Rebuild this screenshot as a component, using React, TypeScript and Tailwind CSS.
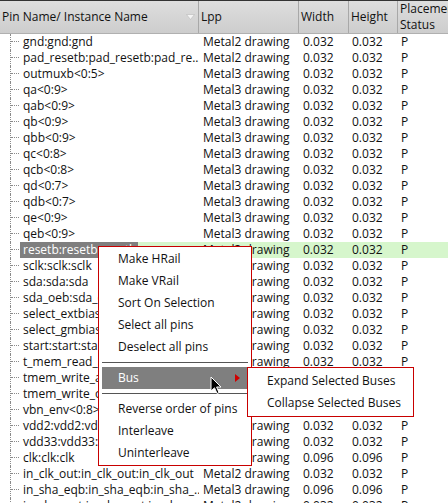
const rows: [string, string, string, string, string][] = [
  ["gnd:gnd:gnd", "Metal2 drawing", "0.032", "0.032", "P"],
  ["pad_resetb:pad_resetb:pad_re...", "Metal2 drawing", "0.032", "0.032", "P"],
  ["outmuxb<0:5>", "Metal3 drawing", "0.032", "0.032", "P"],
  ["qa<0:9>", "Metal3 drawing", "0.032", "0.032", "P"],
  ["qab<0:9>", "Metal3 drawing", "0.032", "0.032", "P"],
  ["qb<0:9>", "Metal3 drawing", "0.032", "0.032", "P"],
  ["qbb<0:9>", "Metal3 drawing", "0.032", "0.032", "P"],
  ["qc<0:8>", "Metal3 drawing", "0.032", "0.032", "P"],
  ["qcb<0:8>", "Metal3 drawing", "0.032", "0.032", "P"],
  ["qd<0:7>", "Metal3 drawing", "0.032", "0.032", "P"],
  ["qdb<0:7>", "Metal3 drawing", "0.032", "0.032", "P"],
  ["qe<0:9>", "Metal3 drawing", "0.032", "0.032", "P"],
  ["qeb<0:9>", "Metal3 drawing", "0.032", "0.032", "P"],
  ["resetb:resetb:resetb", "Metal3 drawing", "0.032", "0.032", "P"],
  ["sclk:sclk:sclk", "Metal3 drawing", "0.032", "0.032", "P"],
  ["sda:sda:sda", "Metal3 drawing", "0.032", "0.032", "P"],
  ["sda_oeb:sda_oeb:sda_oeb", "Metal3 drawing", "0.032", "0.032", "P"],
  ["select_extbias:select_extbias", "Metal3 drawing", "0.032", "0.032", "P"],
  ["select_gmbias:select_gmbias", "Metal3 drawing", "0.032", "0.032", "P"],
  ["start:start:start", "Metal3 drawing", "0.032", "0.032", "P"],
  ["t_mem_read_a:t_mem_read_a", "Metal3 drawing", "0.032", "0.032", "P"],
  ["tmem_write_a:tmem_write_a", "Metal3 drawing", "0.032", "0.032", "P"],
  ["tmem_write_o:tmem_write_o", "Metal3 drawing", "0.032", "0.032", "P"],
  ["vbn_env<0:8>", "Metal3 drawing", "0.032", "0.032", "P"],
  ["vdd2:vdd2:vdd2", "Metal3 drawing", "0.032", "0.032", "P"],
  ["vdd33:vdd33:vdd33", "Metal3 drawing", "0.032", "0.032", "P"],
  ["clk:clk:clk", "Metal3 drawing", "0.096", "0.096", "P"],
  ["in_clk_out:in_clk_out:in_clk_out", "Metal2 drawing", "0.032", "0.032", "P"],
  ["in_sha_eqb:in_sha_eqb:in_sha_...", "Metal3 drawing", "0.096", "0.096", "P"],
  ["in_sha_out:in_sha_out:in_sha_...", "Metal2 drawing", "0.032", "0.032", "P"],
];

const SELECTED = 13;

function HeaderCell({ children, last }: { children: React.ReactNode; last?: boolean }) {
  return (
    <div className={`flex items-center pl-[2px] h-full ${last ? "" : "border-r border-[#a8a8a8]"}`}>
      {children}
    </div>
  );
}

export default function App() {
  return (
    <div
      className="relative w-[448px] h-[503px] overflow-hidden bg-white text-[12px] text-[#111]"
      style={{ fontFamily: '"Open Sans", "Noto Sans", sans-serif' }}
    >
      {/* Header */}
      <div className="grid grid-cols-[199px_100px_50px_49px_1fr] h-[34px] border-t border-[#333] border-b border-b-[#b0b0b0] bg-gradient-to-b from-[#dedede] to-[#cdcdcd]">
        <HeaderCell>
          <span className="flex-1 whitespace-nowrap">Pin Name/ Instance Name</span>
          <svg width="9" height="6" viewBox="0 0 9 6" className="mr-[3px]">
            <path d="M0.5 0.5 L8.5 0.5 L4.5 5.5 Z" fill="#f4f4f4" stroke="#b8b8b8" strokeWidth="0.6" />
          </svg>
        </HeaderCell>
        <HeaderCell>Lpp</HeaderCell>
        <HeaderCell>Width</HeaderCell>
        <HeaderCell>Height</HeaderCell>
        <HeaderCell last>
          <span className="leading-[16px] whitespace-nowrap">
            Placement
            <br />
            Status
          </span>
        </HeaderCell>
      </div>

      {/* Body */}
      <div className="flex flex-col">
        {rows.map((r, i) => {
          const sel = i === SELECTED;
          const cellBg = sel ? "bg-[#d6f6cc]" : "";
          return (
            <div key={i} className="grid grid-cols-[199px_100px_50px_49px_1fr] h-[16px] leading-[16px]">
              <div className="flex h-full overflow-hidden">
                <div className="shrink-0 w-[20px] h-full">
                  <div className="ml-[10px] w-[9px] h-full border-l border-dotted border-[#8a8a8a]">
                    <div className="h-1/2 border-b border-dotted border-[#8a8a8a]" />
                  </div>
                </div>
                <div className={`flex-1 min-w-0 h-full ${cellBg}`}>
                  <span className={`inline-block h-full pl-[3px] pr-[2px] whitespace-nowrap ${sel ? "bg-[#7f7f7f] text-white" : ""}`}>
                    {r[0]}
                  </span>
                </div>
              </div>
              <div className={`pl-[4px] whitespace-nowrap overflow-hidden ${cellBg}`}>{r[1]}</div>
              <div className={`pl-[4px] ${cellBg}`}>{r[2]}</div>
              <div className={`pl-[3px] ${cellBg}`}>{r[3]}</div>
              <div className={`pl-[3px] ${cellBg}`}>{r[4]}</div>
            </div>
          );
        })}
      </div>

      {/* Context menu */}
      <div className="absolute left-[98px] top-[246px] w-[154px] border border-[#c80000] bg-white py-[1px] px-[3px] text-[#111]">
        {["Make HRail", "Make VRail", "Sort On Selection", "Select all pins", "Deselect all pins"].map((t) => (
          <div key={t} className="h-[22px] leading-[22px] pl-[16px] whitespace-nowrap">
            {t}
          </div>
        ))}
        <div className="h-[9px] flex items-center">
          <div className="w-full h-px bg-[#555]" />
        </div>
        <div className="h-[22px] leading-[22px] pl-[16px] pr-[8px] bg-[#7f7f7f] text-white flex items-center justify-between">
          <span>Bus</span>
          <svg width="5" height="8" viewBox="0 0 5 8">
            <path d="M0 0 L5 4 L0 8 Z" fill="#d00000" />
          </svg>
        </div>
        <div className="h-[9px] flex items-center">
          <div className="w-full h-px bg-[#555]" />
        </div>
        {["Reverse order of pins", "Interleave", "Uninterleave"].map((t) => (
          <div key={t} className="h-[22px] leading-[22px] pl-[16px] whitespace-nowrap">
            {t}
          </div>
        ))}
      </div>

      {/* Submenu */}
      <div className="absolute left-[247px] top-[367px] w-[167px] border border-[#c80000] bg-white py-[2px] px-[3px] text-[#111]">
        {["Expand Selected Buses", "Collapse Selected Buses"].map((t) => (
          <div key={t} className="h-[22px] leading-[22px] pl-[16px] whitespace-nowrap">
            {t}
          </div>
        ))}
      </div>

      {/* Mouse cursor */}
      <svg className="absolute left-[210px] top-[376px]" width="13" height="20" viewBox="0 0 13 20">
        <path
          d="M1 1 L1 15 L4.5 11.8 L7 17.5 L9 16.6 L6.6 11 L11 11 Z"
          fill="#000"
          stroke="#fff"
          strokeWidth="1"
          strokeLinejoin="round"
        />
      </svg>
    </div>
  );
}
